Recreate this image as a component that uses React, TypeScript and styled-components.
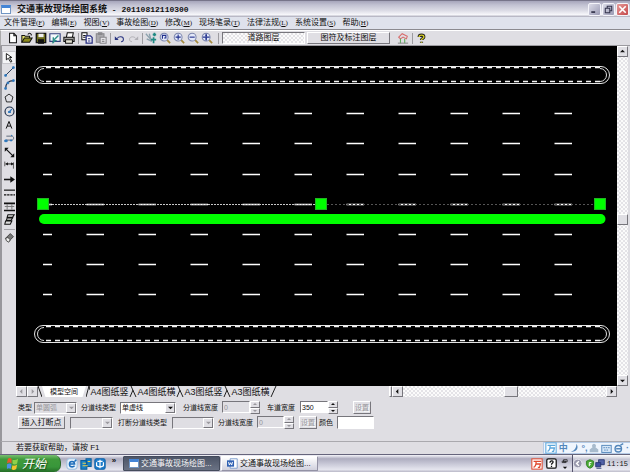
import React from 'react';
import styled, { createGlobalStyle, css } from 'styled-components';

const GlobalStyle = createGlobalStyle`
  *, *::before, *::after { box-sizing: border-box; }
  body {
    margin: 0;
    background: #dfdee3;
    font-family: "Liberation Sans", "Noto Sans CJK SC", sans-serif;
    font-size: 8px;
    color: #111;
  }
  button, input, select { font: inherit; color: inherit; margin: 0; padding: 0; }
  button { border: 0; background: none; }
`;

const raised = css`
  background: #e0dfe4;
  border: 1px solid;
  border-color: #fff #77767c #77767c #fff;
`;

const sunken = css`
  border: 1px solid;
  border-color: #77767c #fff #fff #77767c;
`;

const checker = css`
  background: repeating-conic-gradient(#fbfbfb 0 25%, #e4e3e7 0 50%) 0 0 / 4px 4px;
`;

const Window = styled.div`
  min-height: 100vh;
  display: flex;
  flex-direction: column;
`;

const TitleBar = styled.header`
  height: 17px;
  display: flex;
  align-items: center;
  gap: 1px;
  padding: 0 1px;
  border-top: 1px solid #77758a;
  background: linear-gradient(#a6a5bb, #c2c2d2 25%, #dcdce6 60%, #f6f6fa 85%, #a9a8b8);
`;

const AppGlyph = styled.span`
  width: 10px;
  height: 9px;
  border: 1px solid #7196c4;
  border-top: 3px solid #4484d6;
  background: #fff;
`;

const Title = styled.h1`
  flex: 1;
  margin: 0 0 0 5px;
  font-size: 9px;
  line-height: 14px;
  font-weight: 700;
  white-space: pre;
`;

const Serial = styled.span`
  font-family: "Liberation Mono", monospace;
  font-size: 8px;
`;

const CaptionButton = styled.button<{ $close?: boolean }>`
  width: 13px;
  height: 13px;
  display: grid;
  place-items: center;
  border: 1px solid #f4f4fa;
  border-radius: 2px;
  background: ${(p) =>
    p.$close ? 'linear-gradient(135deg, #e79a98, #c4474a)' : 'linear-gradient(135deg, #dcdce8, #9a9ab4)'};
`;

const MenuBar = styled.nav`
  height: 13px;
  display: flex;
  align-items: center;
  gap: 7px;
  padding-left: 4px;
  background: #dfe2ec;
  border-bottom: 1px solid #8b8a90;
`;

const MenuItem = styled.button`
  line-height: 11px;
  white-space: nowrap;
`;

const Mnemonic = styled.span`
  font-family: "Liberation Serif", serif;
  font-size: 7px;
  u { text-underline-offset: 1px; }
`;

const Toolbar = styled.div`
  height: 16px;
  display: flex;
  align-items: center;
  padding-left: 5px;
  border-top: 1px solid #fff;
  border-bottom: 1px solid #9b9a9f;
  border-left: 1px solid #aaa;
`;

const ToolButton = styled.button<{ $on?: boolean }>`
  width: 14px;
  height: 13px;
  display: grid;
  place-items: center;
  ${(p) => p.$on && css`background: #f5f5f7; box-shadow: 0 0 0 1px #c9c8cd inset;`}
`;

const Divider = styled.span<{ $space: number }>`
  width: ${(p) => p.$space}px;
  height: 11px;
  display: flex;
  justify-content: center;
  &::before { content: ""; width: 1px; background: #9c9ba0; }
`;

const LayerTabs = styled.div`
  display: flex;
  gap: 2px;
  margin-right: 6px;
`;

const LayerTab = styled.button<{ $on?: boolean }>`
  width: 83px;
  height: 12px;
  line-height: 10px;
  ${(p) => (p.$on ? css`${checker} ${sunken}` : raised)}
`;

const Workspace = styled.main`
  flex: 1;
  display: flex;
  min-height: 340px;
`;

const ToolColumn = styled.aside`
  width: 16px;
  padding: 5px 0 0;
  display: flex;
  flex-direction: column;
  align-items: center;
  border-left: 2px solid #98979c;
`;

const ToolGroup = styled.div`
  height: 175px;
  display: flex;
  flex-direction: column;
  justify-content: space-between;
`;

const ToolRule = styled.hr`
  width: 11px;
  margin: 3px 0 0;
  border: 0;
  border-top: 1px solid #a5a4a9;
`;

const Erase = styled.div`padding-top: 1px;`;

const Stage = styled.div`
  flex: 1;
  display: flex;
  min-width: 0;
  background: #000;
  > svg { flex: 1; min-width: 0; width: 100%; height: 100%; }
`;

const VScroll = styled.div`
  width: 11px;
  margin-right: 2px;
  display: flex;
  flex-direction: column;
  ${checker}
`;

const HScroll = styled.div`
  flex: 1;
  max-width: 228px;
  margin-left: auto;
  display: flex;
  ${checker}
`;

const ScrollPart = styled.button<{ $long?: number }>`
  width: 11px;
  height: 11px;
  display: grid;
  place-items: center;
  ${raised}
  ${(p) => p.$long && css`width: ${p.$long}px;`}
`;

const Grow = styled.span<{ $n: number }>`flex: ${(p) => p.$n};`;

const SheetBar = styled.div`
  height: 11px;
  display: flex;
  border-left: 2px solid #98979c;
  padding-left: 14px;
  padding-right: 13px;
`;

const SheetTab = styled.button<{ $on?: boolean }>`
  display: flex;
  align-items: center;
  justify-content: center;
  height: 11px;
  line-height: 10px;
  white-space: nowrap;
  ${(p) =>
    p.$on
      ? css`width: 44px; font-size: 7px; background: #fff; clip-path: polygon(0 0, 100% 0, 92% 100%, 8% 100%);`
      : css`width: 39px; font-size: 9px;`}
`;

const Panel = styled.section`
  height: 44px;
  padding: 4px 0 0 16px;
  border-left: 2px solid #98979c;
  font-size: 7px;
  display: flex;
  flex-direction: column;
  gap: 2px;
`;

const Row = styled.div`
  display: flex;
  align-items: center;
  height: 13px;
`;

const Label = styled.label<{ $w: number }>`
  width: ${(p) => p.$w}px;
  line-height: 11px;
  white-space: nowrap;
`;

const Combo = styled.span<{ $w: number; $off?: boolean }>`
  width: ${(p) => p.$w}px;
  height: 12px;
  display: flex;
  ${sunken}
  background: ${(p) => (p.$off ? '#dfdee3' : '#fff')};
  select {
    flex: 1;
    min-width: 0;
    appearance: none;
    border: 0;
    border-radius: 0;
    background: none;
    padding-left: 1px;
    line-height: 10px;
    opacity: 1;
    &:disabled { color: #96959a; }
  }
`;

const ComboArrow = styled.span`
  width: 10px;
  display: grid;
  place-items: center;
  ${raised}
`;

const Spin = styled.span<{ $w: number }>`
  width: ${(p) => p.$w}px;
  height: 13px;
  display: flex;
  input {
    flex: 1;
    min-width: 0;
    height: 12px;
    padding-left: 1px;
    border-radius: 0;
    background: #fff;
    ${sunken}
    &:disabled { color: #96959a; background: #dfdee3; }
  }
`;

const SpinButtons = styled.span`
  width: 10px;
  display: grid;
  grid-template-rows: 1fr 1fr;
  button { display: grid; place-items: center; min-height: 0; ${raised} }
`;

const PushButton = styled.button<{ $w: number }>`
  width: ${(p) => p.$w}px;
  height: 13px;
  line-height: 11px;
  white-space: nowrap;
  ${raised}
  &:enabled { font-size: 8px; }
  &:disabled { color: #96959a; text-shadow: 1px 1px #fff; }
`;

const ColourBox = styled.input`
  width: 37px;
  height: 13px;
  background: #fff;
  ${sunken}
`;

const Space = styled.span<{ $w: number }>`width: ${(p) => p.$w}px;`;

const StatusBar = styled.footer`
  height: 13px;
  display: flex;
  justify-content: space-between;
  padding-left: 14px;
  border-left: 2px solid #98979c;
  border-top: 1px solid #aaa9ae;
`;

const StatusText = styled.span`line-height: 12px;`;

const InputMethod = styled.div`
  width: 87px;
  display: flex;
  align-items: center;
  justify-content: space-between;
  padding: 0 1px;
  background: #eff5fd;
  border: 1px solid #b5cbe6;
  border-right: 0;
`;

const ImeMark = styled.span`
  font-size: 9px;
  line-height: 10px;
  font-weight: 700;
  color: #5487bb;
`;

const TaskBar = styled.div`
  height: 18px;
  display: flex;
  align-items: stretch;
  border-top: 1px solid #66657c;
  background: linear-gradient(#f4f4fa, #aeadc0 22%, #c6c6d5 50%, #e5e5ee 85%, #b8b7c6);
`;

const StartButton = styled.button`
  width: 61px;
  display: flex;
  align-items: center;
  gap: 3px;
  padding-left: 6px;
  border-radius: 0 7px 7px 0;
  border-right: 1px solid #2d6a2c;
  background: linear-gradient(#7ac070, #3f9a3b 25%, #38963a 70%, #256d27);
  color: #fff;
  font-size: 12px;
  line-height: 14px;
  font-style: italic;
  text-shadow: 1px 1px 1px #1d4d1b;
`;

const QuickLaunch = styled.div`
  width: 62px;
  display: flex;
  align-items: center;
  padding-left: 4px;
`;

const More = styled.button`
  width: 14px;
  height: 14px;
  line-height: 8px;
  font-weight: 700;
  display: flex;
  justify-content: center;
`;

const Task = styled.button<{ $on?: boolean }>`
  width: 97px;
  height: 15px;
  margin: 1px 1px 0 0;
  padding-left: 5px;
  display: flex;
  align-items: center;
  gap: 2px;
  white-space: nowrap;
  overflow: hidden;
  line-height: 12px;
  border-radius: 1px;
  ${(p) =>
    p.$on
      ? css`background: linear-gradient(#4d5567, #6a7284); color: #f6f6f6; border: 1px solid #444b5c;`
      : css`background: linear-gradient(#fff, #d0d0dd); border: 1px solid #f9f9fc; border-color: #fff #9392a5 #9392a5 #fff;`}
`;

const TrayIcons = styled.div`
  margin-left: auto;
  display: flex;
  align-items: center;
`;

const Tray = styled.div`
  width: 58px;
  display: flex;
  align-items: center;
  border-left: 1px solid #55546c;
  background: linear-gradient(#fff, #c6c6d4 25%, #e9e9f1 85%, #bcbbc9);
  > * { flex-shrink: 0; }
  > button { width: 11px; }
`;

const Clock = styled.time`
  margin-left: 2px;
  font-family: "Liberation Mono", monospace;
  font-size: 7px;
  line-height: 12px;
`;

type IconProps = { children: React.ReactNode; size?: number };
const Icon = ({ children, size = 12 }: IconProps) => (
  <svg width={size} height={size} viewBox="0 0 14 14" fill="none" stroke="#111" strokeWidth="1.2" aria-hidden="true">
    {children}
  </svg>
);

const Arrow = ({ dir, dim }: { dir: 'up' | 'down' | 'left' | 'right'; dim?: boolean }) => {
  const paths = { up: 'M0 4L3 1L6 4Z', down: 'M0 2L3 5L6 2Z', left: 'M4 0L1 3L4 6Z', right: 'M2 0L5 3L2 6Z' };
  return (
    <svg width="5" height="5" viewBox="0 0 6 6" aria-hidden="true">
      <path d={paths[dir]} fill={dim ? '#9b9a9f' : '#111'} />
    </svg>
  );
};

const Lens = ({ mark }: { mark: string }) => (
  <Icon>
    <path d="M9 9l4 4" stroke="#a58b3e" strokeWidth="2" />
    <circle cx="6" cy="6" r="4.6" fill="#e3e8f8" stroke="#7c86ad" />
    <path d={mark} stroke="#202f8c" strokeWidth="1.3" />
  </Icon>
);

const mainTools: { name: string; icon?: React.ReactNode; gap?: number }[] = [
  { name: '新建', icon: <Icon><path d="M3 1.5h5l3 3v8H3z" fill="#fff" /><path d="M8 1.5v3h3" /></Icon> },
  { name: '打开', icon: <Icon><path d="M1 12V4h3l1 1h5v2" fill="#e6e26a" /><path d="M1 12l3-5h9l-3 5z" fill="#8c8a1c" /><path d="M8 3c1-2 3-2 4 0v1" /></Icon> },
  { name: '保存', icon: <Icon><path d="M1.500 1.500h11v11h-11z" fill="#6c6c1a" strokeWidth="1.500" /><path d="M4 2h6v4H4z" fill="#eee" stroke="none" /><path d="M4 9h6v4H4z" fill="#111" /></Icon> },
  { name: '导出', icon: <Icon><path d="M1 2h12v9H1z" fill="#f4f8fb" stroke="#33407e" strokeWidth="1.300" /><path d="M11 4L6 9M5 6v4h4M4 13l3-3" stroke="#2b8e86" strokeWidth="1.600" /></Icon> },
  { name: '打印', icon: <Icon><path d="M4 6l1-5h7l-1 5" fill="#fff" /><path d="M1 6h12v5H1z" fill="#a3a2a0" /><path d="M3 9h8v4H3z" fill="#e9e7d8" /></Icon> },
  { name: '', gap: 4 },
  { name: '复制', icon: <Icon><path d="M1 1h6v8H1z" fill="#fff" /><path d="M2.500 4h3M2.500 6h3" /><path d="M6 4.500h5l2 2v6.500H6z" fill="#fff" stroke="#252c80" strokeWidth="1.500" /><path d="M8 8h3M8 10.500h3" stroke="#252c80" /></Icon> },
  { name: '粘贴', icon: <Icon><path d="M1.500 2h9v10h-9z" fill="#aaa9ad" stroke="#89888c" /><path d="M4 1h4v2H4z" fill="#8b8a8e" stroke="#89888c" /><path d="M6 6h7v7H6z" fill="#e4e3e7" stroke="#89888c" /><path d="M8 9h3M8 11h3" stroke="#89888c" /></Icon> },
  { name: '', gap: 4 },
  { name: '撤消', icon: <Icon size={11}><path d="M4 7c2-3 8-3 8 1 0 2-1 3-3 3" stroke="#27327f" strokeWidth="1.300" /><path d="M1 4v5h5z" fill="#27327f" stroke="none" /></Icon> },
  { name: '重做', icon: <Icon size={11}><path d="M10 7C8 4 2 4 2 8c0 2 1 3 3 3" stroke="#b0afb5" /><path d="M13 4v5H8z" fill="#b0afb5" stroke="none" /></Icon> },
  { name: '', gap: 4 },
  { name: '平移', icon: <Icon><path d="M1 2l7 8M2 8l6 3M5 2l2 7" stroke="#8ba1ad" strokeWidth="1.500" /><path d="M9 3h4M11 1v4M7 9h6M10 6v7" stroke="#208a83" strokeWidth="2" /></Icon> },
  { name: '窗口缩放', icon: <Lens mark="M4 8V4h4v3H6" /> },
  { name: '放大', icon: <Lens mark="M3 6h6M6 3v6" /> },
  { name: '缩小', icon: <Lens mark="M3 6h6" /> },
  { name: '全图', icon: <Lens mark="M2 6h8M6 2v8M5 4h2M5 8h2" /> },
  { name: '', gap: 8 },
];

const blue = '#2f78bd';
const drawTools: { name: string; icon: React.ReactNode }[] = [
  { name: '选择', icon: <Icon size={11}><path d="M3 2v8l2.500-2 3 5 1.500-1-3-5h3z" fill="#fff" /></Icon> },
  { name: '直线', icon: <Icon size={11}><path d="M2 12L12 2" stroke="#20314d" /><path d="M1 11h2v2H1zM11 1h2v2h-2z" fill={blue} stroke={blue} /></Icon> },
  { name: '圆弧', icon: <Icon size={11}><path d="M2 12C2 6 6 2 12 2" stroke="#20314d" strokeWidth="1.500" /><path d="M1 11h2v2H1zM11 1h2v2h-2zM4 4h2v2H4z" fill={blue} stroke={blue} /></Icon> },
  { name: '多边形', icon: <Icon size={10}><path d="M7 1.500l5.500 4-2 7h-7l-2-7z" /></Icon> },
  { name: '圆', icon: <Icon size={11}><circle cx="7" cy="7" r="5.700" stroke="#20314d" strokeWidth="1.500" /><path d="M7 7l3-3M6 7h2v1H6z" stroke={blue} strokeWidth="1.500" /></Icon> },
  { name: '文字', icon: <Icon size={10}><path d="M3 12L7 2l4 10M4.500 8.500h5" strokeWidth="1.400" /></Icon> },
  { name: '曲线', icon: <Icon size={11}><path d="M3 4h7c3 0 3 5 0 5H2" stroke="#5a6576" /><path d="M1 9h3v2H1zM8 9h2v1H8zM9 3h1v1" fill={blue} stroke={blue} /></Icon> },
  { name: '斜向标注', icon: <Icon size={11}><path d="M2 2l10 10" strokeWidth="1.500" /><path d="M1 1h5L1 6zM13 13H8l5-5z" fill="#111" stroke="none" /></Icon> },
  { name: '水平标注', icon: <Icon size={11}><path d="M1 2v6M12 3v8" stroke="#555" /><path d="M2 5h10" /><path d="M2 5l3-2v4zM12 5L9 3v4z" fill="#111" stroke="none" /></Icon> },
  { name: '箭头', icon: <Icon size={11}><path d="M0 7h10" strokeWidth="2" /><path d="M8 3l6 4-6 4z" fill="#111" stroke="none" /></Icon> },
  { name: '虚线', icon: <Icon size={11}><path d="M0 4h14" strokeWidth="1.500" /><path d="M0 10h14" strokeWidth="1.500" strokeDasharray="3 1" /></Icon> },
  { name: '道路', icon: <Icon size={11}><path d="M0 3h14M0 12h14" strokeWidth="2" /><path d="M1 7h12M4 4v7M10 4v7" stroke="#777" /></Icon> },
  { name: '人行横道', icon: <Icon size={11}><path d="M5 1h8l-2 3H4zM4 5h7l-2 3H3zM2 9h8l-2 4H1z" fill="#ddd" strokeWidth="1.300" /></Icon> },
];

const menus: [string, string][] = [
  ['文件管理', 'F'], ['编辑', 'E'], ['视图', 'V'], ['事故绘图', 'D'], ['修改', 'M'],
  ['现场笔录', 'T'], ['法律法规', 'L'], ['系统设置', 'S'], ['帮助', 'H'],
];

const sheets = ['A4图纸竖', 'A4图纸横', 'A3图纸竖', 'A3图纸横'];

const SheetEdge = ({ d, w }: { d: string; w: number }) => (
  <svg width={w} height="11" viewBox={`0 0 ${w} 11`} fill="none" stroke="#222" aria-hidden="true"><path d={d} /></svg>
);

const Island = ({ y }: { y: number }) => (
  <g fill="none">
    <rect x="18.500" y={y} width="575" height="17" rx="8.500" stroke="#e4e4e4" />
    <path d={`M28 ${y + 2}a6.500 6.500 0 0 0 0 13M584 ${y + 2}a6.500 6.500 0 0 1 0 13`} stroke="#ddd" />
    <path d={`M30 ${y + 1}h554M30 ${y + 15}h554`} stroke="#f4f4f4" strokeDasharray="5 4" strokeWidth="1.400" />
  </g>
);

const laneRows = [67, 97, 128, 158, 188, 218, 248];
const laneColumns = Array.from({ length: 10 }, (_, i) => 70 + i * 52);

const Drawing = () => (
  <svg viewBox="0 0 601 340" role="img" aria-label="道路图">
    <Island y={20.5} />
    <Island y={279.5} />
    <g stroke="#fff" strokeWidth="1.300">
      {laneRows.map((y) => (
        <path key={y} d={`M27 ${y}h9` + laneColumns.map((x) => `M${x + 0.5} ${y}h17.500`).join('')} transform="translate(0 .5)" />
      ))}
    </g>
    <path d="M33 158.500H299" stroke="#c8c8c8" strokeDasharray="2 1" />
    <path d="M311 158.500H578" stroke="#555" strokeDasharray="2 2" />
    <path d="M28 173H584.500" stroke="#0f0" strokeWidth="10" strokeLinecap="round" />
    {[21.5, 299.5, 578.5].map((x) => (
      <rect key={x} x={x} y="152.500" width="11" height="11" fill="#0f0" stroke="#22b422" />
    ))}
  </svg>
);

type ComboProps = { id: string; label: string; lw: number; w: number; value?: string; off?: boolean };
const ComboField = ({ id, label, lw, w, value = '', off }: ComboProps) => (
  <>
    {lw > 0 && <Label htmlFor={id} $w={lw}>{label}</Label>}
    <Combo $w={w} $off={off}>
      <select id={id} disabled={off} aria-label={label}><option>{value}</option></select>
      <ComboArrow><Arrow dir="down" dim={off} /></ComboArrow>
    </Combo>
  </>
);

const SpinField = ({ id, label, lw, w, value = '', off }: ComboProps) => (
  <>
    <Label htmlFor={id} $w={lw}>{label}</Label>
    <Spin $w={w}>
      <input id={id} defaultValue={value} disabled={off} />
      <SpinButtons>
        <button aria-label="增加" disabled={off}><SpinMark up off={off} /></button>
        <button aria-label="减少" disabled={off}><SpinMark off={off} /></button>
      </SpinButtons>
    </Spin>
  </>
);

const SpinMark = ({ up, off }: { up?: boolean; off?: boolean }) => (
  <svg width="4" height="2" viewBox="0 0 4 2" aria-hidden="true">
    <path d={up ? 'M0 2L2 0L4 2Z' : 'M0 0L2 2L4 0Z'} fill={off ? '#99989d' : '#111'} />
  </svg>
);

const WanIcon = ({ color }: { color: string }) => (
  <Icon><rect x="1" y="1" width="12" height="12" fill="#fff" stroke={color} /><path d="M3 4h9M6 4c0 4-1 6-3 7M6 7h5l-1 4H8" stroke={color} strokeWidth="1.500" /></Icon>
);

export default function App() {
  return (
    <>
      <GlobalStyle />
      <Window>
        <TitleBar>
          <AppGlyph />
          <Title>交通事故现场绘图系统<Serial>{' - 20110812110300'}</Serial></Title>
          <CaptionButton aria-label="最小化"><Icon size={9}><path d="M2 11h6" stroke="#2c2c44" strokeWidth="2.500" /></Icon></CaptionButton>
          <CaptionButton aria-label="还原"><Icon size={9}><path d="M5 5V2h7v7H9M2 5h7v7H2z" stroke="#33334c" strokeWidth="1.600" /></Icon></CaptionButton>
          <CaptionButton aria-label="关闭" $close><Icon size={9}><path d="M2 2l10 10M12 2L2 12" stroke="#fff" strokeWidth="2.500" /></Icon></CaptionButton>
        </TitleBar>

        <MenuBar>
          {menus.map(([name, key]) => (
            <MenuItem key={name}>{name}<Mnemonic>(<u>{key}</u>)</Mnemonic></MenuItem>
          ))}
        </MenuBar>

        <Toolbar>
          {mainTools.map((t, i) =>
            t.gap ? <Divider key={i} $space={t.gap} /> : <ToolButton key={i} aria-label={t.name}>{t.icon}</ToolButton>
          )}
          <LayerTabs>
            <LayerTab $on>道路图层</LayerTab>
            <LayerTab>图符及标注图层</LayerTab>
          </LayerTabs>
          <ToolButton aria-label="现场图">
            <Icon><path d="M2 6l4-4 6 3-1 3-4-2-3 2z" stroke="#d86a6a" /><path d="M4 8v5M9 8v5" stroke="#57ad57" /><path d="M1 13h12" stroke="#888" /></Icon>
          </ToolButton>
          <Divider $space={4} />
          <ToolButton aria-label="帮助">
            <Icon size={11}>
              <path d="M4 5c0-3 6-3 6 0 0 2-3 2-3 4M7 11v1.500" stroke="#222" strokeWidth="4" />
              <path d="M4 5c0-3 6-3 6 0 0 2-3 2-3 4M7 11v1.500" stroke="#d3cb25" strokeWidth="1.800" />
            </Icon>
          </ToolButton>
        </Toolbar>

        <Workspace>
          <ToolColumn>
            <ToolGroup>
              {drawTools.map((t, i) => (
                <ToolButton key={t.name} aria-label={t.name} $on={i === 0}>{t.icon}</ToolButton>
              ))}
            </ToolGroup>
            <ToolRule />
            <Erase>
              <ToolButton aria-label="橡皮">
                <Icon size={11}><path d="M2 8l6-6 4 4-6 6z" fill="#777" stroke="#444" /><path d="M2 8l3-1 3 3-2 3-3-2z" fill="#eee" stroke="#444" /></Icon>
              </ToolButton>
            </Erase>
          </ToolColumn>
          <Stage><Drawing /></Stage>
          <VScroll>
            <ScrollPart aria-label="向上"><Arrow dir="up" /></ScrollPart>
            <Grow $n={157} />
            <ScrollPart aria-label="垂直滑块" />
            <Grow $n={150} />
            <ScrollPart aria-label="向下"><Arrow dir="down" /></ScrollPart>
          </VScroll>
        </Workspace>

        <SheetBar>
          <ScrollPart aria-label="前一张"><Arrow dir="left" dim /></ScrollPart>
          <ScrollPart aria-label="后一张"><Arrow dir="right" dim /></ScrollPart>
          <SheetEdge w={4} d="M0 0L4 11" />
          <SheetTab $on>模型空间</SheetTab>
          <SheetEdge w={4} d="M0 11L3 0L4 4" />
          {sheets.map((s, i) => (
            <React.Fragment key={s}>
              <SheetTab>{s}</SheetTab>
              <SheetEdge w={8} d={i < 3 ? 'M1 11L4 4M2 0L7 11' : 'M1 11L6 0'} />
            </React.Fragment>
          ))}
          <HScroll>
            <ScrollPart $long={3} aria-label="分隔条" />
            <ScrollPart aria-label="向左"><Arrow dir="left" /></ScrollPart>
            <Grow $n={103} />
            <ScrollPart $long={14} aria-label="水平滑块" />
            <Grow $n={89} />
            <ScrollPart aria-label="向右"><Arrow dir="right" /></ScrollPart>
          </HScroll>
        </SheetBar>

        <Panel>
          <Row>
            <ComboField id="kind" label="类型" lw={16} w={43} value="单圆弧" off />
            <Space $w={4} />
            <ComboField id="lane-kind" label="分道线类型" lw={39} w={56} value="单虚线" />
            <Space $w={7} />
            <SpinField id="line-width" label="分道线宽度" lw={39} w={38} value="0" off />
            <Space $w={7} />
            <SpinField id="lane-width" label="车道宽度" lw={33} w={38} value="350" />
            <Space $w={15} />
            <PushButton $w={18} disabled>设置</PushButton>
          </Row>
          <Row>
            <PushButton $w={47}>插入打断点</PushButton>
            <Space $w={5} />
            <ComboField id="break-point" label="打断点" lw={0} w={43} off />
            <Space $w={5} />
            <ComboField id="break-kind" label="打断分道线类型" lw={54} w={42} off />
            <Space $w={4} />
            <SpinField id="break-width" label="分道线宽度" lw={39} w={37} value="0" off />
            <Space $w={5} />
            <PushButton $w={18} disabled>设置</PushButton>
            <Space $w={2} />
            <Label htmlFor="colour" $w={18}>颜色</Label>
            <ColourBox id="colour" />
          </Row>
        </Panel>

        <StatusBar>
          <StatusText>若要获取帮助，请按 F1</StatusText>
          <InputMethod>
            <WanIcon color="#5ba7dc" />
            <ImeMark>中</ImeMark>
            <Icon size={10}><path d="M9 1c4 6 0 12-8 11 5-1 8-5 8-11z" fill="#5487bb" stroke="none" /></Icon>
            <ImeMark>°,</ImeMark>
            <Icon size={10}><path d="M7 1a3 3 0 0 1 2 5l4 3v4H1V9l4-3a3 3 0 0 1 2-5z" fill="#a8bbcd" stroke="none" /></Icon>
            <Icon size={11}><rect x="1" y="3" width="12" height="9" fill="#d7e7f7" stroke="#5487bb" /><path d="M3 6h8M4 9h6" stroke="#5487bb" strokeDasharray="2 1" /></Icon>
            <Icon size={10}><circle cx="6" cy="8" r="4.500" stroke="#5487bb" strokeWidth="2" /><path d="M3 8h7M9 3l4-2" stroke="#5487bb" strokeWidth="2" /></Icon>
            <ImeMark>·</ImeMark>
          </InputMethod>
        </StatusBar>

        <TaskBar>
          <StartButton>
            <Icon size={13}>
              <g stroke="none">
                <path d="M2 2q2-2 4 0v5q-2-2-5 0z" fill="#e8582b" /><path d="M7 3q3 1 6-1l-1 5q-3 2-5 0z" fill="#8ed14a" />
                <path d="M1 8q3-2 5 0l-1 5q-2-2-4 0z" fill="#4d8ee6" /><path d="M7 9q2 1 5-1l-1 5q-3 2-5 0z" fill="#f3c32e" />
              </g>
            </Icon>
            开始
          </StartButton>
          <QuickLaunch>
            <ToolButton aria-label="浏览器"><Icon><rect x="1" y="1" width="12" height="12" rx="3" fill="#e8f2fb" stroke="#9fc1df" /><path d="M4 7h6c0-4-6-4-6 0s4 4 6 2M10 4l2-2" stroke="#1c6dba" strokeWidth="1.800" /></Icon></ToolButton>
            <ToolButton aria-label="桌面"><Icon><path d="M1 3h7v10H1zM7 1h6v9H7z" fill="#1782c8" stroke="#0d5d9b" /><path d="M3 6h4M9 4h3M3 9h6" stroke="#ecd14b" /></Icon></ToolButton>
            <ToolButton aria-label="应用"><Icon><rect x="1" y="1" width="12" height="12" rx="2" fill="#1c7ccb" stroke="#0f62a8" /><path d="M7 2v10M3 5v4q4 3 8 0V5M4 4h6" stroke="#fff" strokeWidth="1.400" /></Icon></ToolButton>
            <More aria-label="更多">»</More>
          </QuickLaunch>
          <Task $on><AppGlyph />交通事故现场绘图...</Task>
          <Task>
            <Icon size={11}><path d="M4 1h9v12H4z" fill="#fff" stroke="#7a9acb" /><path d="M0 3h9v8H0z" fill="#2d5fb2" stroke="none" /><path d="M2 5l1 4 1.500-3L6 9l1-4" stroke="#fff" /></Icon>
            交通事故现场绘图...
          </Task>
          <TrayIcons>
            <ToolButton aria-label="输入法"><WanIcon color="#e0492f" /></ToolButton>
            <ToolButton aria-label="输入法帮助"><Icon size={11}><rect x="1" y="1" width="12" height="12" rx="2" fill="#fff" strokeWidth="1.600" /><path d="M5 6c0-3 4-3 4-1 0 2-2 1-2 3.500M7 10v1.500" strokeWidth="1.600" /></Icon></ToolButton>
            <ToolButton aria-label="选项"><Icon size={10}><path d="M5 1h5v3H5zM3 3h5v2H3z" strokeWidth="1" /><path d="M4 11h6l-3 3z" fill="#111" stroke="none" /></Icon></ToolButton>
          </TrayIcons>
          <Tray>
            <ToolButton aria-label="隐藏图标"><Icon size={11}><circle cx="6" cy="7" r="5.500" fill="#9999ad" stroke="#e9e9f0" /><path d="M7.500 4l-3 3 3 3" stroke="#fff" strokeWidth="1.800" /></Icon></ToolButton>
            <ToolButton aria-label="安全"><Icon size={10}><path d="M7 1l5 2v5q-1 4-5 5-4-1-5-5V3z" fill="#48a834" stroke="#2f7c24" /><path d="M6 10V5h3M6 7.500h2" stroke="#fff" strokeWidth="1.400" /></Icon></ToolButton>
            <Icon size={10}><path d="M5 1h8v7H5z" fill="#5262a8" stroke="#27356f" /><path d="M1 5h7v6H1z" fill="#3e4da0" stroke="#27356f" /><path d="M2 13h7" stroke="#27356f" /></Icon>
            <Clock>11:15</Clock>
          </Tray>
        </TaskBar>
      </Window>
    </>
  );
}
